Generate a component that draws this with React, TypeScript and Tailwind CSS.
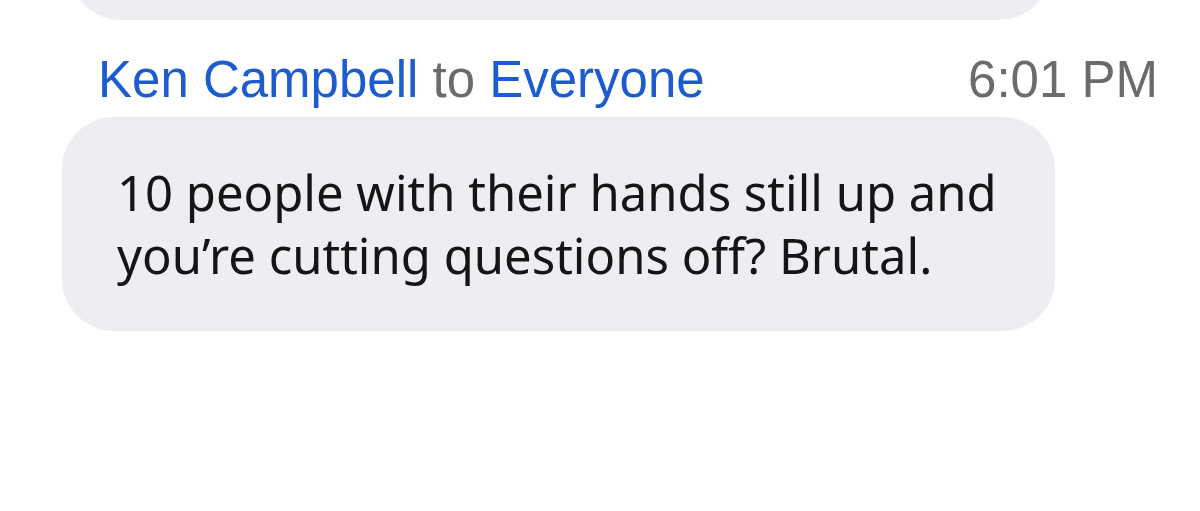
export default function App() {
  return (
    <div className="h-[511px] w-[1200px] overflow-hidden bg-white">
      <div className="ml-[70px] mt-[-60px] h-[80px] w-[980px] rounded-b-[50px] bg-[#eeeef2]" />
      <div className="flex items-baseline justify-between pl-[98px] pr-[42px] pt-[30px] font-['Liberation_Sans',Arial,sans-serif] text-[51px] leading-[60px]">
        <div>
          <span className="text-[#1c5ccf]">Ken Campbell</span>
          <span className="text-[#6b6b6b]"> to </span>
          <span className="text-[#1c5ccf]">Everyone</span>
        </div>
        <span className="text-[#6b6b6b]">6:01 PM</span>
      </div>
      <div className="ml-[62px] mt-[7px] w-[993px] rounded-[52px] bg-[#eeeef2] px-[55px] pb-[44px] pt-[44px] font-['Noto_Sans',sans-serif] text-[49px] leading-[63px] text-[#151515]">
        10 people with their hands still up and
        <br />
        you’re cutting questions off? Brutal.
      </div>
    </div>
  );
}
